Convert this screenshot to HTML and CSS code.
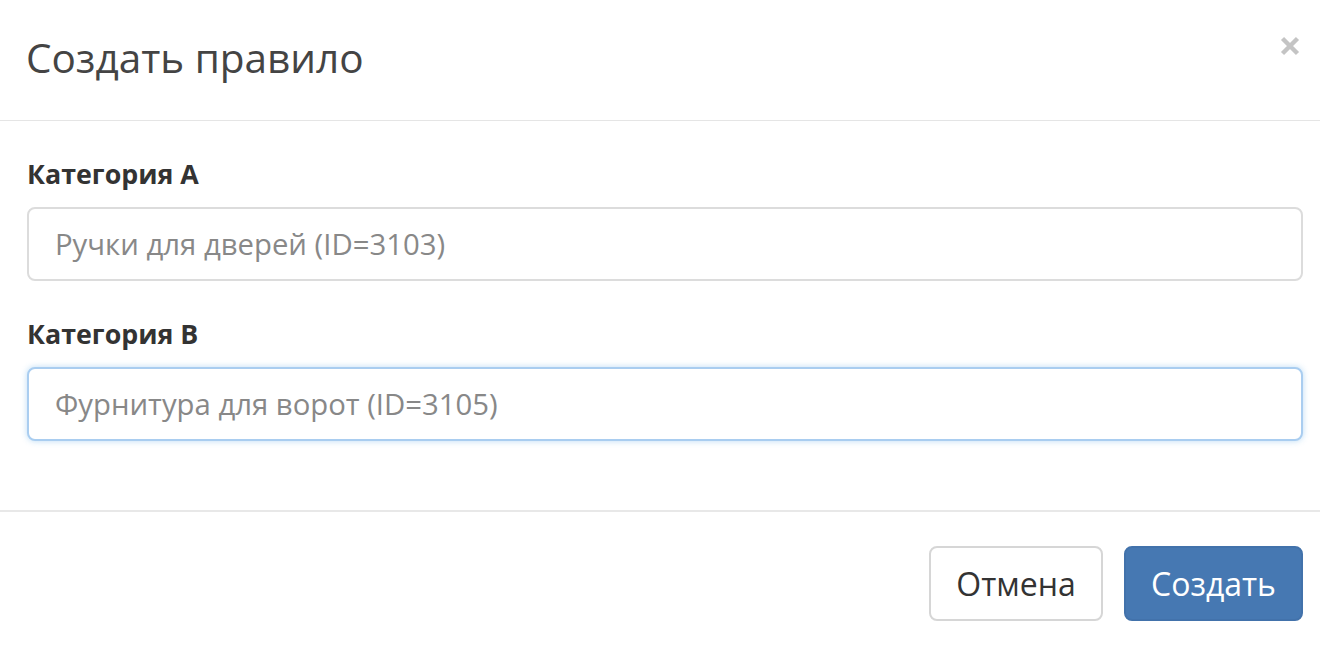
FILE: index.html
```html
<!DOCTYPE html>
<html lang="ru">
<head>
<meta charset="utf-8">
<title>Создать правило</title>
<link rel="stylesheet" href="styles.css">
</head>
<body>
<div class="modal">
  <div class="modal-header">
    <h4 class="modal-title">Создать правило</h4>
    <button class="close" type="button" aria-label="Закрыть">
      <svg width="20" height="20" viewBox="0 0 20 20"><path d="M2.5 2.5L17.5 17.5M17.5 2.5L2.5 17.5" stroke="#c4c4c4" stroke-width="4.4" stroke-linecap="butt"/></svg>
    </button>
  </div>
  <div class="modal-body">
    <div class="form-group">
      <label class="label">Категория А</label>
      <div class="input">Ручки для дверей (ID=3103)</div>
    </div>
    <div class="form-group">
      <label class="label">Категория B</label>
      <div class="input focus">Фурнитура для ворот (ID=3105)</div>
    </div>
  </div>
  <div class="modal-footer">
    <button class="btn btn-default" type="button">Отмена</button>
    <button class="btn btn-primary" type="button">Создать</button>
  </div>
</div>
</body>
</html>
```
FILE: styles.css
```css
html, body {
  margin: 0;
  padding: 0;
  background: #fff;
}
body {
  font-family: "Open Sans", "Noto Sans", sans-serif;
  color: #333;
}
.modal {
  width: 1320px;
  height: 650px;
  overflow: hidden;
}
.modal-header {
  display: flex;
  align-items: flex-start;
  justify-content: space-between;
  padding: 32px 20px 36px 26px;
  border-bottom: 1px solid #e5e5e5;
}
.modal-title {
  margin: 0;
  font-size: 40.5px;
  line-height: 52px;
  font-weight: 400;
  color: #444;
}
.close {
  border: 0;
  background: transparent;
  padding: 0;
  margin-top: 4px;
  width: 20px;
  height: 20px;
  display: block;
}
.close svg { display: block; }
.modal-body {
  padding: 36px 17px 33px 27px;
}
.form-group {
  display: flex;
  flex-direction: column;
  margin-bottom: 36px;
}
.label {
  font-size: 26.8px;
  line-height: 34px;
  font-weight: 700;
  color: #333;
  margin-bottom: 16px;
}
.input {
  box-sizing: border-box;
  height: 74px;
  border: 2px solid #dcdcdc;
  border-radius: 8px;
  padding: 0 26px;
  display: flex;
  align-items: center;
  font-size: 29.3px;
  color: #888;
  background: #fff;
}
.input.focus {
  border-color: #a9cdf0;
  box-shadow: 0 0 6px rgba(102, 175, 233, 0.45);
}
.modal-footer {
  border-top: 2px solid #e8e8e8;
  padding: 34px 17px 0 27px;
  display: flex;
  justify-content: flex-end;
  gap: 21px;
}
.btn {
  box-sizing: border-box;
  height: 75px;
  border-radius: 8px;
  font-family: "Open Sans", "Noto Sans", sans-serif;
  font-size: 32px;
  padding: 0;
  cursor: pointer;
}
.btn-default {
  width: 174px;
  background: #fff;
  border: 2px solid #d6d6d6;
  color: #333;
}
.btn-primary {
  width: 179px;
  background: #4678b2;
  border: 2px solid #4272ab;
  color: #fff;
}
```
